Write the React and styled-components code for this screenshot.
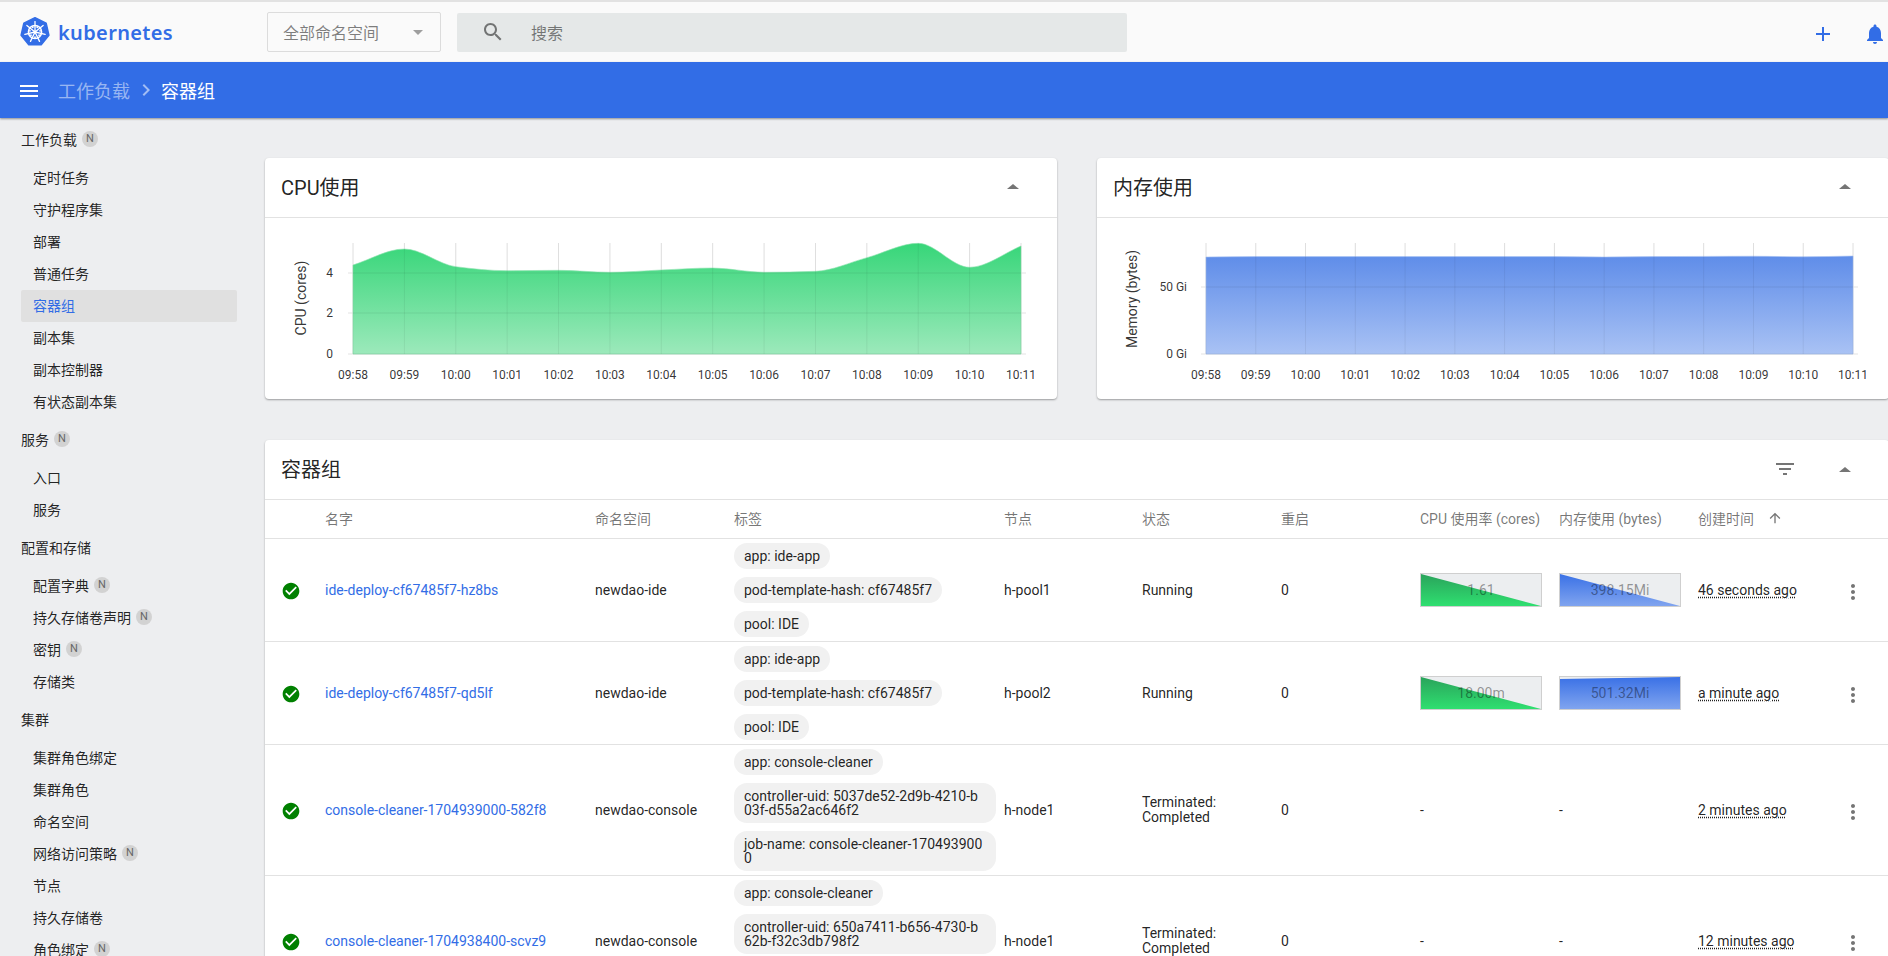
import React from 'react';
import styled, { createGlobalStyle } from 'styled-components';

const Global = createGlobalStyle`
  html, body { margin: 0; padding: 0; height: 100%; overflow: hidden; background: #edeef0; }
  body { font-family: Roboto, "Noto Sans CJK SC", sans-serif; font-size: 14px; color: rgba(0,0,0,.87); }
  * { box-sizing: border-box; }
`;

const Page = styled.div`
  width: 1888px; height: 956px; overflow: hidden; display: flex; flex-direction: column; background: #edeef0;
`;
const Toolbar = styled.header`
  flex: none; height: 62px; background: #fafafa; border-top: 2px solid #e2e2e2; display: flex; align-items: center; padding-left: 20px;
`;
const Brand = styled.div`
  width: 247px; display: flex; align-items: center; gap: 8px; color: #326de6;
`;
const BrandName = styled.span`
  font-family: "Noto Sans", sans-serif; font-weight: 600; font-size: 20px; letter-spacing: 0.35px; line-height: 24px; padding-top: 2px;
`;
const NamespaceSelect = styled.div`
  width: 174px; height: 40px; border: 1px solid #dcdcdc; border-radius: 2px; display: flex; align-items: center; justify-content: space-between; padding: 0 17px 0 15px; font-size: 16px; color: rgba(0,0,0,.5);
`;
const CaretDown = styled.i`
  display: block; width: 0; height: 0; border-left: 5px solid transparent; border-right: 5px solid transparent; border-top: 5px solid #9e9e9e;
`;
const CaretUp = styled.i`
  display: block; width: 0; height: 0; border-left: 6px solid transparent; border-right: 6px solid transparent; border-bottom: 5px solid #757575;
`;
const SearchBox = styled.div`
  margin-left: 16px; width: 670px; height: 39px; background: #e5e8e8; border-radius: 2px; display: flex; align-items: center; padding-left: 24px; gap: 26px; font-size: 16px; color: rgba(0,0,0,.5);
`;
const ToolActions = styled.div`
  margin-left: auto; display: flex; gap: 28px; margin-right: 1px; padding-top: 4px; color: #326de6;
`;
const Crumbs = styled.nav`
  flex: none; height: 56px; background: #326de6; box-shadow: 0 1px 2px rgba(0,0,0,.4); position: relative; z-index: 2; display: flex; align-items: center; padding-left: 20px; color: #fff; font-size: 18px;
`;
const Burger = styled.div`
  width: 18px; height: 12px; margin: 2px 20px 0 0; border-top: 2px solid #fff; border-bottom: 2px solid #fff; position: relative;
  &::after { content: ''; position: absolute; left: 0; right: 0; top: 3px; height: 2px; background: #fff; }
`;
const CrumbLink = styled.span`
  color: rgba(255,255,255,.5);
`;
const CrumbSep = styled.span`
  display: flex; margin: 0 3px 0 4px; color: rgba(255,255,255,.55);
`;
const Body = styled.div`
  flex: 1; min-height: 0; display: flex;
`;
const Side = styled.aside`
  flex: none; width: 265px; padding: 6px 28px 0 21px; overflow: hidden;
`;
const GroupTitle = styled.div`
  height: 32px; margin: 0 0 6px; padding-bottom: 2px; display: flex; align-items: center; gap: 5px; font-size: 14px; white-space: nowrap;
  &:not(:first-child) { margin-top: 6px; }
`;
const SideItem = styled.div`
  height: 32px; padding: 0 12px 2px; display: flex; align-items: center; gap: 5px; font-size: 14px; white-space: nowrap; border-radius: 2px;
  color: ${p => p.$active ? '#326de6' : 'rgba(0,0,0,.87)'};
  background: ${p => p.$active ? '#e0e0e0' : 'transparent'};
`;
const NBadge = styled.span`
  flex: none; width: 16px; height: 16px; border-radius: 50%; background: #d2d2d2; color: #666; font-size: 11px; line-height: 16px; text-align: center;
`;
const Main = styled.main`
  flex: none; width: 1624px; padding-top: 40px; display: flex; flex-direction: column; gap: 41px;
`;
const Charts = styled.div`
  display: grid; grid-template-columns: 792px 792px; gap: 40px;
`;
const Card = styled.section`
  background: #fff; border-radius: 4px; box-shadow: 0 1px 2px rgba(0,0,0,.35);
`;
const CardHead = styled.div`
  height: 60px; border-bottom: 1px solid #e2e2e2; display: flex; align-items: center; justify-content: space-between; padding: 0 38px 3px 16px; font-size: 20px;
`;
const CardTools = styled.div`
  display: flex; align-items: center; gap: 42px; color: #757575; padding-top: 2px;
`;
const ChartSvg = styled.svg`
  display: block; width: 792px; height: 181px;
  text { font-family: Roboto, sans-serif; font-size: 12px; fill: rgba(0,0,0,.8); }
  .axis { font-size: 14px; }
`;
const TableRow = styled.div`
  display: grid; grid-template-columns: 60px 270px 139px 270px 138px 139px 139px 139px 139px 143px 48px;
  align-items: center; border-bottom: 1px solid #e2e2e2;
  ${p => p.$head ? 'height: 39px; padding-bottom: 2px; color: rgba(0,0,0,.54);' : 'padding: 4px 0;'}
`;
const StatusCell = styled.div`
  display: flex; padding: 1px 0 0 16px; color: #008000;
`;
const NameLink = styled.a`
  color: #326de6; text-decoration: none; white-space: nowrap;
`;
const Chips = styled.div`
  display: flex; flex-direction: column; align-items: flex-start; gap: 8px;
`;
const Chip = styled.span`
  display: block; max-width: 262px; padding: 6px ${p => p.$long ? 13 : 10}px 6px 10px; border-radius: 13px; background: #f1f1f1; line-height: 14px; word-break: break-all;
`;
const StatusText = styled.div`
  width: 90px; line-height: 15px;
`;
const SortHead = styled.div`
  display: flex; align-items: center; gap: 13px;
`;
const Spark = styled.div`
  position: relative; width: 122px; height: 34px; border: 1px solid #cfcfcf; background: #eceef0;
  svg { display: block; width: 100%; height: 100%; }
`;
const SparkValue = styled.span`
  position: absolute; inset: 0; display: flex; align-items: center; justify-content: center; color: rgba(0,0,0,.4);
`;
const TimeText = styled.span`
  white-space: nowrap; text-decoration: underline dotted; text-underline-offset: 2px;
`;
const Kebab = styled.div`
  display: flex; color: #757575; padding-top: 3px;
`;

const P = {
  search: 'M15.5 14h-.79l-.28-.27C15.41 12.59 16 11.11 16 9.5 16 5.91 13.09 3 9.5 3S3 5.91 3 9.5 5.91 16 9.5 16c1.61 0 3.09-.59 4.23-1.57l.27.28v.79l5 4.99L20.49 19l-4.99-5zm-6 0C7.01 14 5 11.99 5 9.5S7.01 5 9.5 5 14 7.01 14 9.5 11.99 14 9.5 14z',
  plus: 'M19 13h-6v6h-2v-6H5v-2h6V5h2v6h6v2z',
  bell: 'M12 22c1.1 0 2-.9 2-2h-4c0 1.1.89 2 2 2zm6-6v-5c0-3.07-1.64-5.64-4.5-6.32V4c0-.83-.67-1.5-1.5-1.5s-1.5.67-1.5 1.5v.68C7.63 5.36 6 7.92 6 11v5l-2 2v1h16v-1l-2-2z',
  chevron: 'M10 6L8.59 7.41 13.17 12l-4.58 4.59L10 18l6-6z',
  check: 'M12 2C6.48 2 2 6.48 2 12s4.48 10 10 10 10-4.48 10-10S17.52 2 12 2zm-2 15l-5-5 1.41-1.41L10 14.17l7.59-7.59L19 8l-9 9z',
  filter: 'M10 18h4v-2h-4v2zM3 6v2h18V6H3zm3 7h12v-2H6v2z',
  up: 'M4 12l1.41 1.41L11 7.83V20h2V7.83l5.58 5.59L20 12l-8-8-8 8z',
  more: 'M12 8c1.1 0 2-.9 2-2s-.9-2-2-2-2 .9-2 2 .9 2 2 2zm0 2c-1.1 0-2 .9-2 2s.9 2 2 2 2-.9 2-2-.9-2-2-2zm0 6c-1.1 0-2 .9-2 2s.9 2 2 2 2-.9 2-2-.9-2-2-2z',
};
const Icon = ({ d, size = 24 }) => (
  <svg width={size} height={size} viewBox="0 0 24 24" fill="currentColor"><path d={d} /></svg>
);

const Logo = () => {
  const cx = 15, cy = 15;
  const pt = (r, i, off = 0) => {
    const a = -Math.PI / 2 + (i * 2 * Math.PI) / 7 + off;
    return [cx + r * Math.cos(a), cy + r * Math.sin(a)];
  };
  const hept = [0, 1, 2, 3, 4, 5, 6].map(i => pt(14.2, i).map(v => v.toFixed(2)).join(',')).join(' ');
  return (
    <svg width="30" height="30" viewBox="0 0 30 30">
      <polygon points={hept} fill="#326de6" stroke="#326de6" strokeWidth="1.6" strokeLinejoin="round" />
      <circle cx={cx} cy={cy} r="6.6" fill="none" stroke="#fff" strokeWidth="1.5" />
      <circle cx={cx} cy={cy} r="1.5" fill="#fff" />
      {[0, 1, 2, 3, 4, 5, 6].map(i => {
        const [a, b] = pt(10.4, i);
        return <line key={i} x1={cx} y1={cy} x2={a} y2={b} stroke="#fff" strokeWidth="1.3" strokeLinecap="round" />;
      })}
      {[0, 1, 2, 3, 4, 5, 6].map(i => {
        const [a, b] = pt(5.2, i, Math.PI / 7);
        return <circle key={i} cx={a} cy={b} r="0.9" fill="#fff" />;
      })}
    </svg>
  );
};

function monotonePath(pts) {
  const n = pts.length, m = [], t = [];
  for (let i = 0; i < n - 1; i++) m[i] = (pts[i + 1][1] - pts[i][1]) / (pts[i + 1][0] - pts[i][0]);
  t[0] = m[0]; t[n - 1] = m[n - 2];
  for (let i = 1; i < n - 1; i++) t[i] = m[i - 1] * m[i] <= 0 ? 0 : (2 * m[i - 1] * m[i]) / (m[i - 1] + m[i]);
  let d = `M${pts[0][0]},${pts[0][1]}`;
  for (let i = 0; i < n - 1; i++) {
    const h = (pts[i + 1][0] - pts[i][0]) / 3;
    d += `C${pts[i][0] + h},${pts[i][1] + t[i] * h} ${pts[i + 1][0] - h},${pts[i + 1][1] - t[i + 1] * h} ${pts[i + 1][0]},${pts[i + 1][1]}`;
  }
  return d;
}

const TIMES = ['09:58', '09:59', '10:00', '10:01', '10:02', '10:03', '10:04', '10:05', '10:06', '10:07', '10:08', '10:09', '10:10', '10:11'];

const AreaChart = ({ id, x0, x1, ys, ticks, title, titleX, titleY, tickX, from, to, stroke }) => {
  const top = 25, bottom = 136;
  const step = (x1 - x0) / 13;
  const pts = ys.map((y, i) => [x0 + i * step, y]);
  return (
    <ChartSvg viewBox="0 0 792 181">
      <defs>
        <linearGradient id={id} x1="0" y1="0" x2="0" y2="1">
          <stop offset="0" stopColor={from} />
          <stop offset="1" stopColor={to} />
        </linearGradient>
      </defs>
      {TIMES.map((t, i) => (
        <line key={t} x1={x0 + i * step} x2={x0 + i * step} y1={top} y2={bottom} stroke="#ececec" strokeWidth="1" />
      ))}
      {ticks.map(([l, y]) => (
        <line key={l} x1={x0 - 5} x2={x1 + 5} y1={y} y2={y} stroke="#ececec" strokeWidth="1.5" />
      ))}
      <path d={`${monotonePath(pts)}L${x1},${bottom}L${x0},${bottom}Z`} fill={`url(#${id})`} stroke={stroke} strokeWidth="0.6" />
      {TIMES.map((t, i) => (
        <line key={t} x1={x0 + i * step} x2={x0 + i * step} y1={top} y2={bottom} stroke="rgba(0,0,0,.06)" strokeWidth="1" />
      ))}
      {ticks.map(([l, y]) => (
        <line key={l} x1={x0} x2={x1} y1={y} y2={y} stroke="rgba(0,0,0,.07)" strokeWidth="1" />
      ))}
      {ticks.map(([l, y]) => (
        <text key={l} x={tickX} y={y + 4} textAnchor="end">{l}</text>
      ))}
      {TIMES.map((t, i) => (
        <text key={t} x={x0 + i * step} y={161} textAnchor="middle">{t}</text>
      ))}
      <text className="axis" transform={`translate(${titleX} ${titleY}) rotate(-90)`} textAnchor="middle">{title}</text>
    </ChartSvg>
  );
};

const Sparkline = ({ id, points, from, to, value }) => (
  <Spark>
    <svg viewBox="0 0 120 32" preserveAspectRatio="none">
      <defs>
        <linearGradient id={id} x1="0" y1="0" x2="0" y2="1">
          <stop offset="0" stopColor={from} />
          <stop offset="1" stopColor={to} />
        </linearGradient>
      </defs>
      <polygon points={points} fill={`url(#${id})`} />
    </svg>
    <SparkValue>{value}</SparkValue>
  </Spark>
);

const SIDEBAR = [
  { t: '工作负载', n: true, items: [['定时任务'], ['守护程序集'], ['部署'], ['普通任务'], ['容器组', false, true], ['副本集'], ['副本控制器'], ['有状态副本集']] },
  { t: '服务', n: true, items: [['入口'], ['服务']] },
  { t: '配置和存储', items: [['配置字典', true], ['持久存储卷声明', true], ['密钥', true], ['存储类']] },
  { t: '集群', items: [['集群角色绑定'], ['集群角色'], ['命名空间'], ['网络访问策略', true], ['节点'], ['持久存储卷'], ['角色绑定', true]] },
];

const G = ['#2aa35b', '#2fdf70'];
const B = ['#3a71e6', '#80a4ef'];
const PODS = [
  {
    name: 'ide-deploy-cf67485f7-hz8bs', ns: 'newdao-ide', node: 'h-pool1', status: 'Running', time: '46 seconds ago',
    labels: ['app: ide-app', 'pod-template-hash: cf67485f7', 'pool: IDE'], cpu: '1.61', mem: '398.15Mi', memPts: '0,0 120,32 0,32',
  },
  {
    name: 'ide-deploy-cf67485f7-qd5lf', ns: 'newdao-ide', node: 'h-pool2', status: 'Running', time: 'a minute ago',
    labels: ['app: ide-app', 'pod-template-hash: cf67485f7', 'pool: IDE'], cpu: '18.00m', mem: '501.32Mi', memPts: '0,2 120,0 120,32 0,32',
  },
  {
    name: 'console-cleaner-1704939000-582f8', ns: 'newdao-console', node: 'h-node1', status: 'Terminated: Completed', time: '2 minutes ago',
    labels: ['app: console-cleaner', 'controller-uid: 5037de52-2d9b-4210-b03f-d55a2ac646f2', 'job-name: console-cleaner-1704939000'],
  },
  {
    name: 'console-cleaner-1704938400-scvz9', ns: 'newdao-console', node: 'h-node1', status: 'Terminated: Completed', time: '12 minutes ago',
    labels: ['app: console-cleaner', 'controller-uid: 650a7411-b656-4730-b62b-f32c3db798f2', 'job-name: console-cleaner-1704938400'],
  },
];

export default function App() {
  return (
    <Page>
      <Global />
      <Toolbar>
        <Brand><Logo /><BrandName>kubernetes</BrandName></Brand>
        <NamespaceSelect>全部命名空间<CaretDown /></NamespaceSelect>
        <SearchBox><Icon d={P.search} />搜索</SearchBox>
        <ToolActions><Icon d={P.plus} /><Icon d={P.bell} /></ToolActions>
      </Toolbar>
      <Crumbs>
        <Burger />
        <CrumbLink>工作负载</CrumbLink>
        <CrumbSep><Icon d={P.chevron} /></CrumbSep>
        <span>容器组</span>
      </Crumbs>
      <Body>
        <Side>
          {SIDEBAR.map(g => (
            <React.Fragment key={g.t}>
              <GroupTitle>{g.t}{g.n && <NBadge>N</NBadge>}</GroupTitle>
              {g.items.map(([label, n, active]) => (
                <SideItem key={label} $active={active}>{label}{n && <NBadge>N</NBadge>}</SideItem>
              ))}
            </React.Fragment>
          ))}
        </Side>
        <Main>
          <Charts>
            <Card>
              <CardHead>CPU使用<CaretUp /></CardHead>
              <AreaChart
                id="cpuFill" x0={88} x1={756}
                ys={[47, 31, 48.7, 52.7, 52.3, 54.3, 52, 50, 54.3, 53.3, 39.7, 25.3, 49.3, 28]}
                ticks={[['4', 55], ['2', 95], ['0', 136]]}
                title="CPU (cores)" titleX={41} titleY={80} tickX={68}
                from="#37d679" to="#9ce9bb" stroke="#8fe3b0"
              />
            </Card>
            <Card>
              <CardHead>内存使用<CaretUp /></CardHead>
              <AreaChart
                id="memFill" x0={109} x1={756}
                ys={[39, 38.6, 38.6, 38.6, 38.6, 38.6, 38.6, 38.6, 39, 38.6, 38.4, 38.2, 38.8, 38]}
                ticks={[['50 Gi', 69], ['0 Gi', 136]]}
                title="Memory (bytes)" titleX={40} titleY={81} tickX={90}
                from="#5f8de9" to="#a9c2f4" stroke="#a9c2f4"
              />
            </Card>
          </Charts>
          <Card>
            <CardHead>
              容器组
              <CardTools><Icon d={P.filter} /><CaretUp /></CardTools>
            </CardHead>
            <TableRow $head>
              <span />
              <span>名字</span>
              <span>命名空间</span>
              <span>标签</span>
              <span>节点</span>
              <span>状态</span>
              <span>重启</span>
              <span>CPU 使用率 (cores)</span>
              <span>内存使用 (bytes)</span>
              <SortHead>创建时间<Icon d={P.up} size={16} /></SortHead>
              <span />
            </TableRow>
            {PODS.map((p, i) => (
              <TableRow key={p.name}>
                <StatusCell><Icon d={P.check} size={20} /></StatusCell>
                <NameLink href="#">{p.name}</NameLink>
                <span>{p.ns}</span>
                <Chips>{p.labels.map(l => <Chip key={l} $long={l.length > 30}>{l}</Chip>)}</Chips>
                <span>{p.node}</span>
                <StatusText>{p.status}</StatusText>
                <span>0</span>
                {p.cpu ? <Sparkline id={`c${i}`} points="0,0 120,32 0,32" from={G[0]} to={G[1]} value={p.cpu} /> : <span>-</span>}
                {p.mem ? <Sparkline id={`m${i}`} points={p.memPts} from={B[0]} to={B[1]} value={p.mem} /> : <span>-</span>}
                <TimeText>{p.time}</TimeText>
                <Kebab><Icon d={P.more} /></Kebab>
              </TableRow>
            ))}
          </Card>
        </Main>
      </Body>
    </Page>
  );
}
